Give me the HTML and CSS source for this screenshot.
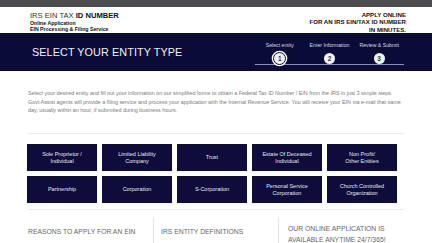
FILE: index.html
```html
<!DOCTYPE html>
<html>
<head>
<meta charset="utf-8">
<link rel="stylesheet" href="styles.css">
</head>
<body>
<div class="topbar"></div>
<header class="header">
  <div class="wrap header-row">
    <div class="logo">
      <div class="logo-title">IRS EIN TAX <b>ID NUMBER</b></div>
      <div class="logo-sub">Online Application</div>
      <div class="logo-sub">EIN Processing &amp; Filing Service</div>
    </div>
    <div class="tagline">APPLY ONLINE<br>FOR AN IRS EIN/TAX ID NUMBER<br>IN MINUTES.</div>
  </div>
</header>
<section class="band">
  <div class="wrap band-row">
    <h1 class="band-title">SELECT YOUR ENTITY TYPE</h1>
    <div class="steps">
      <div class="steps-line"></div>
      <div class="step"><span class="step-label">Select entity</span><span class="step-num active">1</span></div>
      <div class="step"><span class="step-label">Enter Information</span><span class="step-num">2</span></div>
      <div class="step"><span class="step-label">Review &amp; Submit</span><span class="step-num">3</span></div>
    </div>
  </div>
</section>
<main class="wrap">
  <p class="intro">Select your desired entity and fill out your information on our simplified forms to obtain a Federal Tax ID Number / EIN from the IRS in just 3 simple steps. Govt Assist agents will provide a filing service and process your application with the Internal Revenue Service. You will receive your EIN via e-mail that same day, usually within an hour, if submitted during business hours.</p>
  <div class="entities">
    <a class="entity">Sole Proprietor /<br>Individual</a>
    <a class="entity">Limited Liability<br>Company</a>
    <a class="entity">Trust</a>
    <a class="entity">Estate Of Deceased<br>Individual</a>
    <a class="entity">Non Profit/<br>Other Entities</a>
    <a class="entity">Partnership</a>
    <a class="entity">Corporation</a>
    <a class="entity">S-Corporation</a>
    <a class="entity">Personal Service<br>Corporation</a>
    <a class="entity">Church Controlled<br>Organization</a>
  </div>
  <div class="info">
    <div class="info-col"><h2>REASONS TO APPLY FOR AN EIN</h2></div>
    <div class="info-col"><h2>IRS ENTITY DEFINITIONS</h2></div>
    <div class="info-col"><h2 class="up">OUR ONLINE APPLICATION IS AVAILABLE ANYTIME 24/7/365!</h2></div>
  </div>
</main>
</body>
</html>
```

FILE: styles.css
```css
* { box-sizing: border-box; }
html, body { margin: 0; padding: 0; }
body {
  font-family: "Liberation Sans", Arial, sans-serif;
  background: #fff;
  width: 432px;
  height: 243px;
  overflow: hidden;
}
.wrap { margin: 0 28px; }
.topbar { height: 7px; background: #4d4d4f; }
.header { height: 26px; }
.header-row {
  display: flex;
  justify-content: space-between;
  align-items: flex-start;
  padding-left: 2px;
}
.logo { padding-top: 4px; color: #111; }
.logo-title {
  font-size: 7.6px;
  line-height: 9px;
  color: #333;
}
.logo-title b { color: #0d0c3a; }
.logo-sub {
  font-size: 5.2px;
  font-weight: bold;
  line-height: 6.2px;
  color: #111;
}
.tagline {
  padding-top: 3.5px;
  text-align: right;
  font-size: 6.1px;
  line-height: 7.6px;
  font-weight: bold;
  color: #111;
  margin-right: -2px;
}
.band {
  height: 38px;
  background: #0b0b38;
  color: #fff;
}
.band-row {
  display: flex;
  justify-content: space-between;
  align-items: center;
  height: 38px;
}
.band-title {
  margin: 0 0 0 4px;
  font-weight: normal;
  font-size: 10.8px;
  letter-spacing: 0.1px;
  color: #f2f2f6;
}
.steps {
  position: relative;
  display: flex;
  width: 149px;
  padding-top: 2px;
}
.steps-line {
  position: absolute;
  left: 0;
  right: 0;
  top: 23.5px;
  height: 1px;
  background: #8d8fb5;
}
.step {
  position: relative;
  flex: 1;
  display: flex;
  flex-direction: column;
  align-items: center;
  gap: 5px;
}
.step-label {
  font-size: 5.2px;
  color: #d8d8e4;
  white-space: nowrap;
}
.step-num {
  width: 11px;
  height: 11px;
  border-radius: 50%;
  background: #f2f2f2;
  color: #333;
  font-size: 6.5px;
  font-weight: bold;
  display: flex;
  align-items: center;
  justify-content: center;
}
.step-num.active {
  width: 13px;
  height: 13px;
  border: 1.5px solid #0b0b38;
  box-shadow: 0 0 0 1.3px #ffffff;
  margin-top: -1px;
  margin-bottom: -1px;
}
.intro {
  margin: 0;
  padding: 18px 0 0 0;
  font-size: 5.4px;
  line-height: 8.6px;
  color: #7a7a7a;
  height: 63px;
  border-bottom: 1px solid #ececec;
}
.entities {
  display: grid;
  grid-template-columns: repeat(5, 70px);
  grid-auto-rows: 27px;
  gap: 5px;
  margin: 10px 0 0 -1px;
}
.entity {
  background: #0d0c3a;
  color: #e8e8f0;
  font-size: 5.5px;
  line-height: 6.6px;
  text-align: center;
  display: flex;
  align-items: center;
  justify-content: center;
}
.info {
  margin-top: 6px;
  border-top: 1px solid #ececec;
  display: grid;
  grid-template-columns: 125px 125px 1fr;
  padding-top: 7px;
}
.info-col {
  border-left: 1px solid #e6e6e6;
  padding: 10px 0 0 7px;
  height: 40px;
}
.info-col:first-child { border-left: none; padding-left: 0; }
.info h2 {
  margin: 0;
  font-weight: normal;
  font-size: 6.8px;
  line-height: 10.5px;
  color: #666;
}
.info h2.up { margin-top: -3px; }
.info-col:last-child { padding-left: 9px; }
```
